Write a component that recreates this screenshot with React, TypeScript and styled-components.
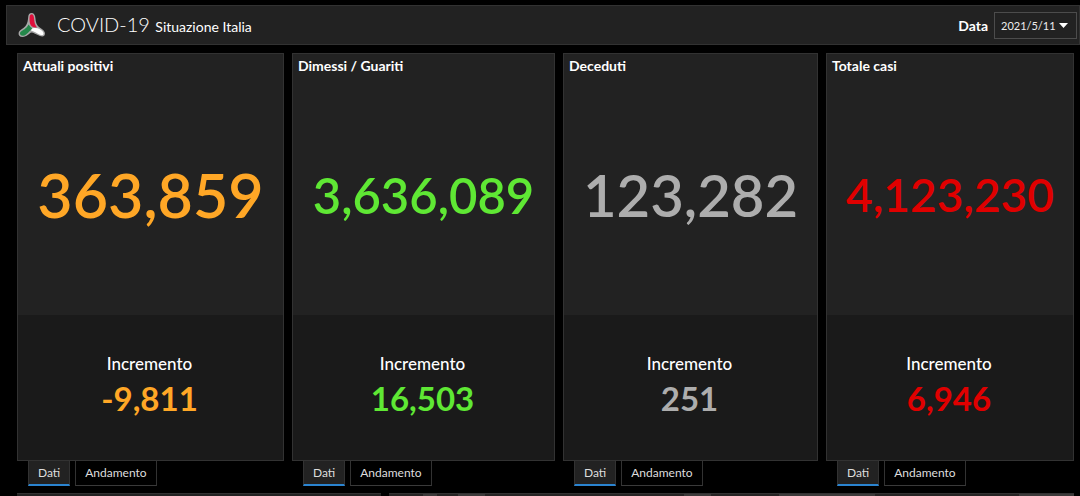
import React from "react";
import styled, { createGlobalStyle } from "styled-components";

const GlobalStyle = createGlobalStyle`
  * { box-sizing: border-box; }
  body {
    margin: 0;
    background: #000;
    color: #fff;
    font-family: Lato, "Open Sans", sans-serif;
    overflow: hidden;
  }
`;

const Dashboard = styled.div`
  display: flex;
  flex-direction: column;
  padding-top: 5px;
`;

const Header = styled.header`
  display: flex;
  align-items: center;
  height: 40px;
  margin-left: 6px;
  padding: 0 2px 0 11px;
  background: #222;
  border: 1px solid #323232;
`;

const Logo = styled.svg`
  width: 28px;
  height: 26px;
  flex: none;
`;

const Title = styled.h1`
  flex: 1;
  margin: 0 0 0 11px;
  font-size: 20px;
  line-height: 28px;
  font-weight: 300;
`;

const Subtitle = styled.small`
  font-size: 14px;
  font-weight: 400;
`;

const DateLabel = styled.label`
  font-size: 14px;
  font-weight: 700;
`;

const SelectWrap = styled.div`
  position: relative;
  margin-left: 6px;
`;

const DateSelect = styled.select`
  display: block;
  appearance: none;
  width: 83px;
  height: 27px;
  padding: 0 6px;
  background: #222;
  border: 1px solid #4c4c4c;
  border-radius: 0;
  color: #eee;
  font-family: inherit;
  font-size: 11px;
`;

const Caret = styled.svg`
  position: absolute;
  right: 9px;
  top: 11px;
  width: 9px;
  height: 5px;
  pointer-events: none;
`;

const Columns = styled.main`
  display: grid;
  grid-template-columns: 267fr 263fr 255fr 248fr;
  gap: 8px;
  margin: 8px 6px 0 17px;
`;

const Card = styled.section`
  border: 1px solid #323232;
  background: #222;
`;

const Total = styled.div`
  display: grid;
  grid-template-rows: 24px 1fr;
  height: 261px;
`;

const CardTitle = styled.h2`
  margin: 0;
  padding: 2px 5px;
  font-size: 14px;
  line-height: 20px;
  font-weight: 700;
`;

const Figure = styled.div<{ $color: string; $size: number }>`
  align-self: center;
  padding-bottom: 4px;
  text-align: center;
  white-space: nowrap;
  color: ${(p) => p.$color};
  font-size: ${(p) => p.$size}px;
  line-height: 72px;
  font-weight: 600;
`;

const Increment = styled.div`
  display: flex;
  flex-direction: column;
  align-items: center;
  justify-content: center;
  height: 145px;
  padding: 0 2px 4px 0;
  background: #1a1a1a;
`;

const IncrementLabel = styled.h3`
  margin: 0;
  font-size: 17px;
  line-height: 24px;
  font-weight: 500;
`;

const IncrementValue = styled.div<{ $color: string }>`
  color: ${(p) => p.$color};
  font-size: 33px;
  line-height: 44px;
  font-weight: 700;
`;

const Tabs = styled.div`
  display: flex;
  gap: 5px;
  padding-left: 11px;
`;

const Tab = styled.button<{ $active?: boolean }>`
  height: 25px;
  padding: ${(p) => (p.$active ? "0 9px" : "0 9px 1px")};
  background: ${(p) => (p.$active ? "#222" : "#000")};
  border: 1px solid #323232;
  border-top: 0;
  border-bottom: ${(p) => (p.$active ? "2px solid #2b84d0" : "1px solid #3a3a3a")};
  color: #ddd;
  font-family: inherit;
  font-size: 12px;
`;

const NextRow = styled.div`
  display: grid;
  grid-template-columns: 364fr 684fr;
  gap: 8px;
  margin: 7px 6px 0 17px;
`;

const NextPanel = styled.div`
  height: 3px;
  background: #222;
  border-top: 1px solid #323232;
`;

const MapPanel = styled(NextPanel)`
  background: linear-gradient(
    90deg,
    #262424 5%, #3c3a3a 5% 7%, #262424 7% 10%, #3c3a3a 10% 14%,
    #262424 14% 43%, #3c3a3a 43% 47%, #262424 47% 57%, #3c3a3a 57% 71%,
    #262424 71% 92%, #3c3a3a 92%
  );
`;

const stats = [
  { title: "Attuali positivi", total: "363,859", size: 61, increment: "-9,811", color: "#ffa726" },
  { title: "Dimessi / Guariti", total: "3,636,089", size: 49, increment: "16,503", color: "#5fe834" },
  { title: "Deceduti", total: "123,282", size: 58, increment: "251", color: "#adadad" },
  { title: "Totale casi", total: "4,123,230", size: 46, increment: "6,946", color: "#e00000" },
];

export default function App() {
  return (
    <>
      <GlobalStyle />
      <Dashboard>
        <Header>
          <Logo viewBox="0 0 28 26" aria-hidden="true">
            <path
              d="M13.500 1C16 1 17.200 3 17.400 6C17.700 10 18.500 13 21 15C24 17 27 19 27 21.500C27 24.500 24.500 25 22 24C18 22.500 15.500 20.500 13.500 20.500C11 21 9 25 4.500 25C1.500 25 .3 23 .6 21C1 18 5 17 7.500 14C9.500 11.500 10 8 10.200 5C10.400 2.500 11.500 1 13.500 1Z"
              fill="#a8a8a8"
            />
            <path d="M13.800 2.300C15.500 2.300 15.900 4.500 16.100 7C16.400 10.500 17 13 19 15.500C15.500 16 12.800 14.500 12 11.500C11.500 9 11.400 6 11.700 4.500C12 3 12.800 2.300 13.800 2.300Z" fill="#e0103c" />
            <path d="M10.500 12.500C12 14.500 13 15.500 14.500 16.500C11.500 18.500 9 23.500 5 23.700C2.800 23.700 1.800 22.500 2 21C2.500 19 6 18 8.500 15.500C9.500 14.500 10 13.500 10.500 12.500Z" fill="#24874a" />
            <path d="M14 16.500C17 15.800 19.500 16 21.500 17C23.500 18.300 25.600 19.800 25.600 21.500C25.600 23.300 24 23.500 22 22.700C19 21.500 17 19.500 13 18.500Z" fill="#fff" />
          </Logo>
          <Title>
            COVID-19 <Subtitle>Situazione Italia</Subtitle>
          </Title>
          <DateLabel htmlFor="date">Data</DateLabel>
          <SelectWrap>
            <DateSelect id="date" defaultValue="2021/5/11">
              <option>2021/5/11</option>
            </DateSelect>
            <Caret viewBox="0 0 9 5" aria-hidden="true">
              <path d="M0 0H9L4.500 5Z" fill="#fff" />
            </Caret>
          </SelectWrap>
        </Header>
        <Columns>
          {stats.map((s) => (
            <div key={s.title}>
              <Card>
                <Total>
                  <CardTitle>{s.title}</CardTitle>
                  <Figure $color={s.color} $size={s.size}>{s.total}</Figure>
                </Total>
                <Increment>
                  <IncrementLabel>Incremento</IncrementLabel>
                  <IncrementValue $color={s.color}>{s.increment}</IncrementValue>
                </Increment>
              </Card>
              <Tabs>
                <Tab type="button" $active>Dati</Tab>
                <Tab type="button">Andamento</Tab>
              </Tabs>
            </div>
          ))}
        </Columns>
        <NextRow>
          <NextPanel />
          <MapPanel />
        </NextRow>
      </Dashboard>
    </>
  );
}
